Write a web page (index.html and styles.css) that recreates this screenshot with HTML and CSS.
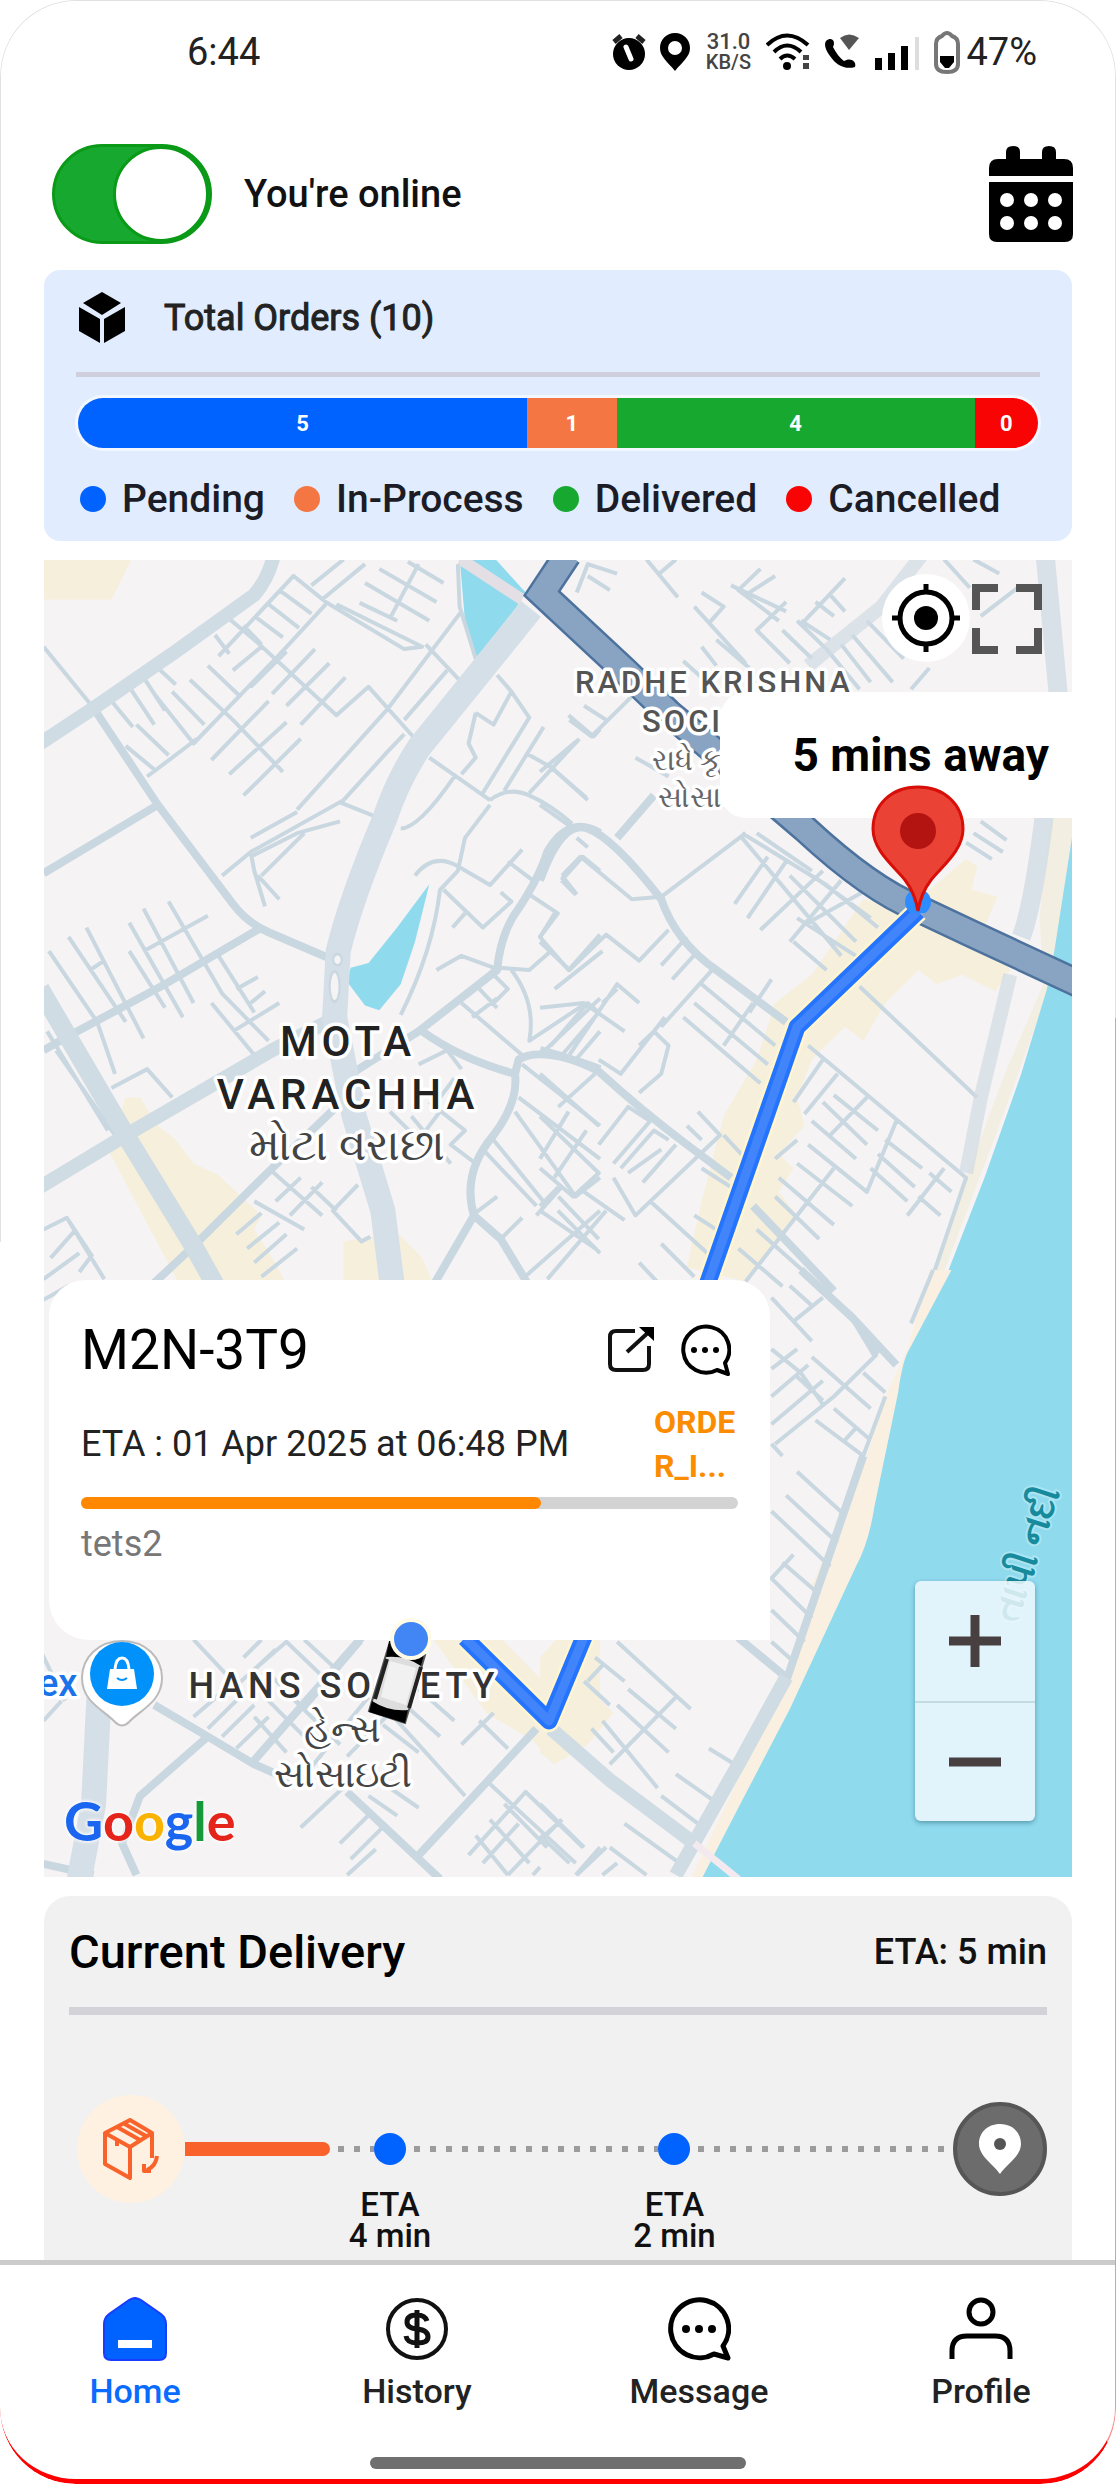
FILE: index.html
```html
<!DOCTYPE html>
<html lang="en">
<head>
<meta charset="utf-8">
<meta name="viewport" content="width=device-width, initial-scale=1">
<title>Driver Home</title>
<link rel="stylesheet" href="styles.css">
</head>
<body>
<div class="phone">
  <div class="status">
    <span>6:44</span>
    <div class="status-icons">
      <svg width="34" height="40" viewBox="0 0 34 40"><circle cx="17" cy="22" r="16"/><path d="M2 10L9 4M32 10L25 4" stroke="#222" stroke-width="5"/><path d="M14 15L19 27" stroke="#fff" stroke-width="5" stroke-linecap="round"/></svg>
      <svg width="30" height="38" viewBox="0 0 30 38"><path fill-rule="evenodd" d="M15 0C6 0 0 7 0 15C0 24 8 29 15 38C22 29 30 24 30 15C30 7 24 0 15 0ZM15 8A7 7 0 1 1 15 22A7 7 0 1 1 15 8Z"/></svg>
      <div class="speed"><span>31.0</span><span>KB/S</span></div>
      <svg width="44" height="38" viewBox="0 0 44 38"><g fill="none" stroke="#000" stroke-width="4"><path d="M1 12Q21-7 42 12"/><path d="M8 19Q21 6 35 19"/><path d="M14 26Q21 19 29 26"/></g><circle cx="21" cy="33" r="4"/><path d="M37 22h6v5h-6zM37 30h6v6h-6z" fill="#444"/></svg>
      <svg width="36" height="38" viewBox="0 0 36 38"><path d="M2 8C8 3 12 9 9 14C12 20 16 25 20 28C26 24 33 28 31 34C21 37 12 32 6 23C1 16 0 11 2 8Z"/><path d="M16 5Q25-2 35 5L25 17Z" fill="#555"/></svg>
      <svg width="46" height="38" viewBox="0 0 46 38"><path d="M1 25h7v12H1zM14 20h7v17h-7zM27 13h7v24h-7z"/><path d="M41 4h4v33h-4z" fill="#ddd"/></svg>
      <div class="battery">
        <svg width="26" height="44" viewBox="0 0 26 44"><path d="M8 6Q13 0 18 6Q24 8 24 14V34Q24 42 13 42Q2 42 2 34V14Q2 8 8 6Z" fill="#fff" stroke="#777" stroke-width="4"/><path d="M6 26h14v6l-5 6h-4l-5-6z"/></svg>
        <span>47%</span>
      </div>
    </div>
  </div>

  <header class="header">
    <label class="online"><input type="checkbox" class="switch" checked><span>You're online</span></label>
    <button class="icon-btn" aria-label="Calendar">
      <svg width="84" height="96" viewBox="0 0 84 96"><path d="M0 30V22Q0 13 9 13H17V6Q17 0 24 0T31 6V13H53V6Q53 0 60 0T67 6V13H75Q84 13 84 22V30Z"/><path d="M0 36H84V88Q84 96 76 96H8Q0 96 0 88Z"/><g fill="#fff"><circle cx="18" cy="54" r="7"/><circle cx="42" cy="54" r="7"/><circle cx="66" cy="54" r="7"/><circle cx="18" cy="77" r="7"/><circle cx="42" cy="77" r="7"/><circle cx="66" cy="77" r="7"/></g></svg>
    </button>
  </header>

  <section class="orders">
    <div class="orders-head">
      <svg width="48" height="52" viewBox="0 0 48 52"><path d="M24 0L43 11L24 23L5 11Z"/><path d="M1 15L22 27V51L1 39Z"/><path d="M47 15L26 27V51L47 39Z"/></svg>
      <h2>Total Orders (10)</h2>
    </div>
    <hr class="rule">
    <div class="stack">
      <span class="blue" style="width:46.8%">5</span><span class="orange" style="width:9.3%">1</span><span class="green" style="width:37.3%">4</span><span class="red" style="width:6.6%">0</span>
    </div>
    <ul class="legend">
      <li><i class="blue"></i>Pending</li>
      <li><i class="orange"></i>In-Process</li>
      <li><i class="green"></i>Delivered</li>
      <li><i class="red"></i>Cancelled</li>
    </ul>
  </section>

  <section class="map" aria-label="Delivery map">
    <svg class="map-canvas" viewBox="0 0 1028 1317" preserveAspectRatio="xMidYMid slice">
      <rect width="1028" height="1317" fill="#f5f3f4"/>
      <!-- north-west quarter -->
      <g transform="translate(-4 -10) scale(.35714 .47193)">
        <path class="zone" d="M0 0H270L200 105H0ZM190 1270L240 1160L280 1160L330 1220L380 1250L430 1300L500 1325L620 1410L600 1440L650 1500L700 1570H400ZM850 1465L925 1455L1005 1450L1070 1500L1110 1570H850Z"/>
        <path class="water" d="M1175 15H1270L1360 90L1335 120L1222 230L1192 170ZM1090 708L1050 830L1010 920L950 975L910 965L860 915L870 885L920 875L1000 800Z"/>
        <path d="M1175 18L1350 105" fill="none" stroke="#e4dfe4" stroke-width="26"/>
        <path class="r1" d="M10 205L150 335M490 180L530 220M500 225L710 55L800 110L1020 210L1070 205L830 115M520 140L600 190L830 350L920 290L1050 400M570 160L620 200M600 140L680 185M640 115L725 165M670 85L760 135M760 75L850 20M790 105L910 30M910 70L1090 150M895 112L1000 150M950 40L1110 110M1030 25L1130 70M1060 30L980 145M470 245L560 310M420 275L540 360L680 470M370 300L460 370M320 305L430 410L660 230L800 115M270 370L360 435M240 415L320 465M300 480L440 400M290 270L350 340M330 250L380 285M250 290L320 370M200 320L260 375M480 445L640 320M530 475L690 365M570 520L730 400M540 255L620 205M590 290L690 215M650 305L770 210M690 330L810 240M730 370L855 270M510 690L590 640L850 530L970 430L1020 390M590 640L600 680L630 755M590 650L720 600L840 575M610 690L670 740M620 690L740 600M720 550L970 340L1180 130M590 610L720 555M1020 360L1140 255M1080 200L1180 280M1280 265L1320 300L1370 355L1240 515M1220 345L1270 370L1320 300M1220 345L1200 410L1220 440L1180 475M1090 440L1260 530M1160 480Q1060 590 1010 590M840 535L940 565M1300 510L1410 375M1360 430L1430 460L1530 525M1370 515L1510 400M1260 530Q1310 500 1370 520T1490 580M1260 540L1190 610L1170 680L1120 720Q1100 850 1010 985M1050 690Q1100 640 1170 670L1260 710L1350 635M1310 660L1380 700M1130 720L1240 800L1320 745L1290 725M1155 800L1190 770M1170 30L1175 120L1220 230M1370 730L1450 770L1400 820L1480 890L1568 815M1460 700L1520 650L1568 680M1460 700L1500 730M1280 885L1370 890L1430 850M1110 890L1180 860L1270 885M1180 960L1350 1070M1230 930L1280 970M1320 890Q1390 960 1370 1040L1520 965M1270 960L1310 930L1270 900M1210 990L1280 950M25 850L160 1000L210 1110M80 820L240 1000M130 800L290 1035M250 850L350 970M250 790L400 990M290 760L430 960M360 745L510 940L640 1040M500 860L600 980M140 890L180 870M290 850L470 775M480 960L600 1070M550 930L610 905M590 960L630 935M540 1020L670 960M200 1140L300 1100L370 1160M20 1020L190 1230M45 1060L210 1240M10 1440L75 1415L145 1495L110 1530M30 1500L100 1440M10 1545L110 1490M75 1415L180 1545M640 1310L790 1410M600 1380L740 1440M550 1450L620 1405M580 1480L670 1425M600 1510L690 1450M620 1540L720 1480M660 1380L730 1330M700 1410L790 1340M760 1350L830 1400M890 1345L820 1400L900 1465L925 1455M980 1190L1060 1250L1120 1190M1040 1200L1150 1300M1090 1170L1190 1230L1150 1260L1220 1300M1060 1090L1140 1060L1180 1100M1160 1120L1100 1180M1350 1090L1568 1220M1340 1160L1568 1290M1330 1190L1500 1370L1568 1330M1270 1250L1420 1390M1240 1270L1390 1390M1400 1290L1480 1190M1440 1330L1530 1230M1210 1410L1280 1370M1290 1460L1350 1415M1350 1545L1568 1400M1450 1400L1568 1490M1390 1410L1460 1350M1480 350L1550 395L1568 380M1400 1070L1568 950M1500 1080L1568 1020"/>
        <path class="r2" d="M150 335L330 540L540 750Q580 790 640 810L810 865M10 685L330 540M10 1060L80 1030L350 920L620 800M430 1475L650 1310L830 1180M310 1560L430 1475M850 1120L1060 1020L1280 890Q1290 810 1340 760Q1400 690 1420 640Q1480 560 1568 600M1070 1020Q1180 1080 1330 1110Q1340 1170 1270 1240Q1180 1320 1215 1410L1290 1460L1370 1560M1215 1410L1100 1560M1330 1110L1340 1080Q1400 1050 1568 1100"/>
        <path class="r3" d="M0 410L150 335L380 215L600 95Q640 60 655 10M0 1350L240 1240L650 1060L830 990"/>
        <path class="r4" d="M0 930L240 1240L430 1475L500 1570"/>
        <path class="r5" d="M1375 125L1060 420Q1000 490 965 570Q870 740 835 850L825 990L880 1200L960 1400L990 1580"/>
        <ellipse class="loop" cx="833" cy="868" rx="12" ry="12"/><ellipse class="loop" cx="825" cy="925" rx="14" ry="32"/>
      </g>
      <!-- north-east quarter -->
      <g transform="translate(496 -10) scale(.36735 .47193)">
        <path class="zone" d="M1160 655L1190 670L1175 720L1245 735L1210 800L1280 890L1240 935L1150 900L1080 920L1030 890L940 960L880 1040L830 1010L740 1080L700 1160L720 1220L650 1280L690 1310L650 1360L700 1410L560 1550L400 1520L440 1380L500 1200L590 1080L640 960L740 900L880 740L1000 760Z"/>
        <path fill="#f3eee2" d="M1390 560H1470V720L1400 900L1250 1220L1080 1570H1050L1160 1330L1260 1120L1370 920L1360 780Z"/>
        <path class="water" d="M1450 600L1400 850L1380 930L1310 1110L1210 1330L1090 1570H1460Z"/>
        <path class="r1" d="M100 90L130 30L210 50M130 55L190 85M290 20L375 100M325 50L370 20M520 75L670 130M600 40L540 85L650 150M560 95L640 55M420 120L560 240M440 90L500 120L460 155M670 110L590 170L680 240M720 150L830 60M710 150L790 190M750 110L800 140M790 95L830 130M390 235L440 270M440 205L480 245M480 190L570 250M660 170L740 230M700 150L780 210M780 210L870 295M820 200L900 280M850 180L960 280M890 150L990 230M1010 295L1060 250M1180 20L1250 50M1100 20L1170 80M1200 140L1300 80M80 360L140 395L250 310M120 330L180 360M0 470L100 405M30 460L130 530M0 540L90 590M100 610L130 630M60 690L110 650L250 740L330 735L560 600M260 440L350 480M60 690L100 730M550 600L780 710L920 800M590 600L740 680M530 750L620 650M565 780L670 660M600 805L770 680M680 830L820 700M550 610L820 860M700 780L860 860M690 830L780 890M730 790L890 720M760 700L900 780M680 690L860 830M630 910L570 980M0 820L40 770M0 830L80 890L180 815L270 870L350 805M330 880L400 820M360 910L430 850M0 970L120 960L230 1020M40 930L170 850M30 1050L130 960L160 980L60 1070M170 960L210 930M80 1070L210 920L270 960M160 1080L220 1110L340 990M270 1050L310 1020L350 1050L330 1110L270 1150M330 1010L480 880M440 920L640 1050M420 960L620 1090M390 990L600 1130M500 1050L580 960M870 925L1190 1160M730 1050L1160 1330L1060 1560M690 1170L770 1080M720 1195L810 1110M770 1170L890 1260M800 1155L920 1230M740 1210L860 1290M790 1240L890 1160M730 1260L890 1360L970 1210M700 1300L850 1390M650 1330L800 1430M640 1370L760 1460M560 1550L800 1310M640 1290L700 1250M940 1250L1040 1310M920 1280L1020 1350M900 1310L1000 1380M1000 1410L1100 1310M1030 1370L1090 1410M1060 1320L1120 1360M1180 600L1260 640M1160 620L1230 655M1200 575L1270 615M0 1110L160 1220M50 1180L150 1110M160 1260L240 1180L300 1210L200 1300M220 1310L310 1230L350 1250M240 1320L330 1270M280 1340L370 1260M0 1200L160 1320L90 1370L0 1310M400 1220L440 1250M430 1190L490 1240L260 1410L200 1330M0 1390L50 1350M120 1360L230 1420M50 1370L160 1460M0 1400L150 1480M20 1545L180 1400M300 1380L470 1500M330 1470L420 1540M270 1510L330 1560M420 1410L500 1450M590 1440L720 1530M540 1480L660 1560M500 1240L560 1290M440 1310L540 1360"/>
        <path class="r2" d="M0 700Q60 570 130 590T330 740Q370 830 480 890L670 1000M0 1060Q100 1080 160 1105Q280 1190 400 1260L520 1330M210 610L310 520M580 1390L800 1570"/>
        <path class="r3" d="M730 245L930 120L1040 10M1160 1320L1200 1160L1280 900" stroke-opacity=".7"/>
        <path class="r4" d="M1375 10L1410 300L1370 580Q1340 760 1310 820" stroke-opacity=".8"/>
        <path d="M75 10L5 92L230 255L350 345L450 410L720 590Q900 720 1030 760L1180 815L1470 920" fill="none" stroke="#4c729d" stroke-width="29" vector-effect="non-scaling-stroke"/>
        <path d="M75 10L5 92L230 255L350 345L450 410L720 590Q900 720 1030 760L1180 815L1470 920" fill="none" stroke="#89a4c2" stroke-width="24" vector-effect="non-scaling-stroke"/>
      </g>
      <!-- south-west quarter -->
      <g transform="translate(-4 710) scale(.35714 .39541)">
        <path class="zone" d="M1090 920H1568V1160L1440 1250L1380 1190L1250 1120Z"/>
        <path fill="#f5f3f4" d="M1290 930L1430 1060L1400 980L1450 930Z"/>
        <path class="r1" d="M10 75L80 40M10 1140L60 1090M430 935L550 1050L690 940L840 1070M570 980L620 935M600 1010L660 960M740 935L830 1010M640 1020L740 1110L900 940M680 1060L840 1200M430 1130L520 1060M470 1160L560 1080M510 1180L600 1100M550 1210L640 1130M630 1080L740 1180M600 1130L690 1220M730 1290L920 1080M1010 1090L1120 1180M1060 1060L1160 1140M860 1230L980 1120L1190 1330M1180 1200L1270 1120M1230 1140L1310 1210M960 1150L1060 1220M1260 1300L1500 1500M1200 1480L1360 1320L1520 1460M1220 1430L1310 1530M1260 1390L1370 1500M1300 1350L1420 1460M1240 1500L1340 1400M1310 1530L1460 1390M730 1410L860 1300M840 1450L930 1370M870 1490L970 1400M860 1530L940 1465M920 1330L1000 1380M980 1310L1060 1360M1380 1530L1400 1510M1500 1530L1568 1460M0 960L70 1090"/>
        <path class="r2" d="M320 1100L470 1180L600 1250L700 1290M470 1180L280 1330L230 1450L270 1530M600 1240L900 930M860 1320L1120 1540M1060 1480L1390 1160M0 1500L150 1530"/>
        <path class="r5" d="M165 1080L150 1350L110 1540"/>
      </g>
      <!-- south-east quarter -->
      <g transform="translate(496 710) scale(.36735 .39541)">
        <path class="zone" d="M0 980L110 1040L200 1120L130 1200L40 1250L0 1220ZM820 620L740 800L780 800Z"/>
        <path fill="#f9f0e2" d="M1060 0L1000 200L940 320L890 470L790 750L690 1000L590 1190L410 1540H500L900 800L1140 0Z"/>
        <path class="water" d="M1120 0L1000 210Q985 240 975 310L910 600Q895 690 860 750L680 1110L540 1360L440 1540H1460V0Z"/>
        <path class="r1" d="M630 70L740 180M690 130L770 70M680 40L740 90M630 200L710 260L770 340M630 320L730 240M630 390L770 280M640 440L800 320L915 215L870 150M700 270L770 330M740 220L900 350M630 440L660 470M800 350L900 430M880 260L940 310M750 380L880 470M830 430L860 400M700 510L830 620M670 570L810 690M630 610L790 750M690 720L630 780L740 880M660 740L760 820M630 860L720 940M630 940L690 990M630 250L700 200M210 940L410 1110M150 980L230 1040M120 1040L190 1100M130 1040L170 1000M240 1060L370 1160M210 1100L350 1220M170 1140L320 1310M140 1160L200 1220M190 1250L370 1080M460 1210L530 1250M370 1275L470 1340M330 1330L430 1400M230 1400L380 1500M190 1460L290 1530M0 1350L120 1460M0 1440L60 1390M100 1530L180 1460M0 1430L80 1500M1010 135L1070 0M170 1530L210 1500M820 620L940 320"/>
        <path class="r2" d="M710 0L850 120L970 240M860 130L915 215M540 930L670 1030M880 470L670 1040"/>
        <path class="r3" d="M30 1160L190 1290L420 1450M670 1030L540 1250L370 1530"/>
        <path d="M420 1450L540 1540" stroke="#f3e9ee" stroke-width="7" vector-effect="non-scaling-stroke"/>
      </g>
      <path class="route-glow" d="M874 351L753 467L542 1072L505 1161L421 1078"/>
      <path class="route" d="M874 351L753 467L542 1072L505 1161L421 1078"/>
      <path class="route-core" d="M874 351L753 467L542 1072L505 1161L421 1078"/>

      <g class="labels">
        <text class="place" x="304" y="496">MOTA</text>
        <text class="place" x="304" y="549">VARACHHA</text>
        <text class="guj-l" x="303" y="600">મોટા વરાછા</text>
        <text class="area" x="670" y="133">RADHE KRISHNA</text>
        <text class="area start" x="598" y="172">SOCIETY</text>
        <text class="guj-s start" x="608" y="210">રાધે કૃષ્ણ</text>
        <text class="guj-s start" x="614" y="247">સોસાયટી</text>
        <text class="hans" x="300" y="1138">HANS SOCIETY</text>
        <text class="guj" x="298" y="1182">હેન્સ</text>
        <text class="guj" x="299" y="1227">સોસાઇટી</text>
        <text class="poi start" x="-6" y="1136">ex</text>
        <text class="river start" transform="translate(973 1064) rotate(-72)">તાપી નદી</text>
      </g>

      <!-- shop marker -->
      <path d="M78 1081C54 1081 38 1098 38 1118C38 1142 60 1150 71 1162Q78 1169 85 1162C96 1150 118 1142 118 1118C118 1098 102 1081 78 1081Z" fill="#fff" stroke="#bbb" stroke-width="2"/>
      <circle cx="78" cy="1114" r="32" fill="#0091fa"/>
      <path d="M66 1109H90L93 1129H63Z" fill="#fff"/><path d="M71 1109Q72 1098 78 1098T85 1109" fill="none" stroke="#fff" stroke-width="3"/><path d="M73 1118Q78 1122 83 1118" fill="none" stroke="#0091fa" stroke-width="2"/>
    </svg>

    <button class="locate" aria-label="My location">
      <svg width="68" height="68" viewBox="0 0 68 68"><g fill="none" stroke="#000" stroke-width="5"><circle cx="34" cy="34" r="26"/><path d="M34 0V9M34 59V68M0 34H9M59 34H68"/></g><circle cx="34" cy="34" r="12"/></svg>
    </button>
    <button class="full" aria-label="Full screen">
      <svg width="70" height="70" viewBox="0 0 70 70"><path d="M4 26V4H26M44 4H66V26M66 44V66H44M26 66H4V44" fill="none" stroke="#555" stroke-width="8"/></svg>
    </button>
    <div class="bubble">5 mins away</div>
    <svg class="pin" width="94" height="128" viewBox="0 0 94 128"><circle cx="47" cy="117" r="13" fill="#2d8cff"/><path d="M47 2C20 2 2 20 2 44C2 66 24 82 34 95Q44 108 47 126Q50 108 60 95C70 82 92 66 92 44C92 20 74 2 47 2Z" fill="#ea4335" stroke="#d80f08" stroke-width="3"/><circle cx="47" cy="46" r="18" fill="#b31412"/></svg>

    <article class="order">
      <div class="order-head">
        <h3>M2N-3T9</h3>
        <div class="order-actions">
          <button class="icon-btn" aria-label="Open order">
            <svg width="48" height="48" viewBox="0 0 48 48"><path d="M28 5H9Q3 5 3 11V38Q3 44 9 44H36Q42 44 42 38V20" fill="none" stroke="#111" stroke-width="4"/><path d="M20 26L44 4" stroke="#111" stroke-width="4"/><path d="M32 1H47V15Z"/></svg>
          </button>
          <button class="icon-btn" aria-label="Message customer">
            <svg width="52" height="52" viewBox="0 0 52 52"><path d="M46 39A23 23 0 1 0 38 46L49 50Z" fill="none" stroke="#000" stroke-width="4" stroke-linejoin="round"/><circle cx="15" cy="26" r="3"/><circle cx="26" cy="26" r="3"/><circle cx="37" cy="26" r="3"/></svg>
          </button>
        </div>
      </div>
      <div class="order-row"><span>ETA : 01 Apr 2025 at 06:48 PM</span><strong>ORDE<br>R_I...</strong></div>
      <div class="progress"><span style="width:70%"></span></div>
      <p>tets2</p>
    </article>

    <svg class="car" width="64" height="108" viewBox="0 0 64 108"><path d="M22 28L58 38L38 106L2 94Z" fill="#ddd" stroke="#555" stroke-width="2"/><path d="M22 24Q40 24 58 35L54 49Q38 38 19 40Z"/><path d="M5 84Q22 95 41 93L38 106L2 95Z"/><path d="M23 44L49 51L39 88L14 80Z" fill="#f1f1f1"/><path d="M20 42L8 82M54 50L42 91" stroke="#222" stroke-width="4"/><circle cx="44" cy="22" r="21" fill="#fffbe6"/><circle cx="44" cy="22" r="17" fill="#4285f4"/></svg>

    <div class="zoom">
      <button aria-label="Zoom in"><svg width="54" height="54" viewBox="0 0 54 54"><path d="M27 1V53M1 27H53" stroke="#484040" stroke-width="9"/></svg></button>
      <button aria-label="Zoom out"><svg width="54" height="54" viewBox="0 0 54 54"><path d="M1 27H53" stroke="#484040" stroke-width="9"/></svg></button>
    </div>
    <div class="google"><span class="g1">G</span><span class="g2">o</span><span class="g3">o</span><span class="g1">g</span><span class="g4">l</span><span class="g2">e</span></div>
  </section>

  <section class="delivery">
    <div class="delivery-head"><h2>Current Delivery</h2><span>ETA: 5 min</span></div>
    <hr class="rule thick">
    <div class="timeline">
      <div class="start-stop">
        <svg width="58" height="62" viewBox="0 0 58 62"><g fill="none" stroke="#f9622a" stroke-width="4" stroke-linejoin="round"><path d="M50 40V15L28 2L3 15V46L28 60V29L3 15M28 29L50 15M15 9L38 22M21 5L44 18M15 22V28"/><path d="M55 38Q54 48 45 52M42 46V53H49"/></g></svg>
      </div>
      <div class="done"></div>
      <div class="dots d1"></div>
      <div class="stop"><div class="stop-label"><span>ETA</span><span>4 min</span></div></div>
      <div class="dots d2"></div>
      <div class="stop"><div class="stop-label"><span>ETA</span><span>2 min</span></div></div>
      <div class="dots d3"></div>
      <div class="end-stop">
        <svg width="44" height="50" viewBox="0 0 44 50"><path d="M22 0C9 0 1 9 1 20C1 32 15 40 22 50C29 40 43 32 43 20C43 9 35 0 22 0Z" fill="#fff"/><circle cx="22" cy="20" r="6" fill="#555"/></svg>
      </div>
    </div>
  </section>

  <footer class="footer">
    <nav class="tabs">
      <a href="#home" class="active">
        <svg width="64" height="64" viewBox="0 0 64 64"><path d="M26 3Q32-1 38 3L58 17Q63 21 63 27V56Q63 63 56 63H8Q1 63 1 56V27Q1 21 6 17Z" fill="#0062ff" stroke="#1a3cff" stroke-width="2"/><path d="M15 43H49V51H15Z" fill="#fff"/></svg>
        Home</a>
      <a href="#history">
        <svg width="64" height="64" viewBox="0 0 64 64" fill="none" stroke="#111" stroke-width="4"><circle cx="32" cy="32" r="29"/><path d="M42 24Q40 18 32 18Q22 18 22 25Q22 31 32 32Q43 33 43 40Q43 46 32 46Q22 46 21 39M32 13V51" stroke-width="5"/></svg>
        History</a>
      <a href="#message">
        <svg width="64" height="64" viewBox="0 0 64 64"><path d="M56 49A29 29 0 1 0 47 57L61 61Z" fill="none" stroke="#000" stroke-width="5" stroke-linejoin="round"/><circle cx="19" cy="32" r="4"/><circle cx="32" cy="32" r="4"/><circle cx="45" cy="32" r="4"/></svg>
        Message</a>
      <a href="#profile">
        <svg width="64" height="64" viewBox="0 0 64 64" fill="none" stroke="#000" stroke-width="5"><circle cx="32" cy="15" r="12"/><path d="M3 62V54Q3 39 18 39H46Q61 39 61 54V62"/></svg>
        Profile</a>
    </nav>
    <div class="handle"></div>
  </footer>
</div>
</body>
</html>
```
FILE: styles.css
```css
* { box-sizing: border-box; }
body { margin: 0; background: #fff; font-family: Roboto, "Noto Sans", sans-serif; color: #111; }
h2, h3, p, ul { margin: 0; padding: 0; font-weight: 500; }
button { border: 0; padding: 0; background: none; cursor: pointer; }
svg { display: block; flex: none; }

.phone { position: relative; display: flex; flex-direction: column; min-height: 100vh; background: #fff; border-radius: 76px; overflow: hidden; }
.phone::before, .phone::after { content: ""; position: absolute; inset: 0; z-index: 1; pointer-events: none; }
.phone::before { bottom: 50%; border: 1px solid #e4e0e0; border-bottom: 0; border-radius: 76px 76px 0 0; }
.phone::after { top: 41%; border-right: 1px solid #ff8f8f; border-bottom: 5px solid #f00; border-radius: 0 0 76px 76px; }

.status { display: flex; justify-content: space-between; align-items: center; height: 104px; padding: 0 79px 0 187px; font-size: 38px; color: #222; }
.status-icons, .battery { display: flex; align-items: center; gap: 14px; }
.battery { gap: 6px; }
.speed { display: flex; flex-direction: column; align-items: center; width: 48px; font-size: 22px; line-height: 20px; font-weight: 500; color: #444; }
.speed span + span { font-size: 20px; }

.header { display: flex; justify-content: space-between; align-items: center; height: 166px; padding: 14px 43px 0 52px; }
.online { display: flex; align-items: center; gap: 32px; font-size: 38px; font-weight: 500; }
.switch { appearance: none; display: flex; align-items: center; justify-content: flex-end; width: 160px; height: 100px; margin: 0; padding: 2px; border: 3px solid #0a9a18; border-radius: 50px; background: #17a82f; }
.switch::before { content: ""; width: 92px; height: 92px; border-radius: 50%; background: #fff; outline: 3px solid #0a9a18; outline-offset: -1px; }
.switch:not(:checked) { justify-content: flex-start; background: #aaa; }

.orders { margin: 0 44px; padding: 16px 32px 20px; background: #e1edff; border-radius: 16px; }
.orders-head { display: flex; align-items: center; gap: 38px; height: 64px; padding-left: 2px; }
.orders-head h2 { font-size: 36px; font-weight: 400; -webkit-text-stroke: 1px #222; color: #222; }
.rule { height: 5px; margin: 22px 0 21px; border: 0; background: #cfcfde; }
.stack { display: flex; height: 50px; border-radius: 25px; overflow: hidden; margin: 0 2px; box-shadow: 0 0 0 3px #f3f7ff; }
.stack span { display: flex; align-items: center; justify-content: center; color: #fff; font-size: 22px; font-weight: 700; }
.blue { background: #0062ff; }
.orange { background: #f37643; }
.green { background: #17a82f; }
.red { background: #f80404; }
.legend { display: flex; gap: 29px; margin-top: 29px; padding-left: 4px; list-style: none; }
.legend li { display: flex; align-items: center; gap: 16px; font-size: 39px; line-height: 44px; font-weight: 500; color: #1c1c26; white-space: nowrap; }
.legend i { width: 26px; height: 26px; border-radius: 50%; }

.map { position: relative; margin: 19px 44px 0; aspect-ratio: 1028 / 1317; overflow: hidden; }
.map-canvas { width: 100%; height: 100%; }
.zone { fill: #f6efdc; }
.water { fill: #90daee; }
.r1, .r2, .r3, .r4, .r5 { fill: none; stroke: #c9d7e0; stroke-linejoin: round; vector-effect: non-scaling-stroke; }
.r1 { stroke-width: 4px; }
.r2 { stroke-width: 8px; }
.r3 { stroke-width: 14px; stroke: #d0dce4; }
.r4 { stroke-width: 19px; stroke: #d0dce4; }
.r5 { stroke-width: 25px; stroke: #d5dfe7; }
.loop { fill: #f5f3f4; stroke: #c9d7e0; stroke-width: 6px; }
.route, .route-core, .route-glow { fill: none; stroke-linejoin: round; }
.route-glow { stroke: #fff6d0; stroke-width: 22px; }
.route { stroke: #2474ff; stroke-width: 17px; }
.route-core { stroke: #4285fa; stroke-width: 9px; }
.labels text { text-anchor: middle; fill: #333; stroke: #fff; stroke-width: 7px; stroke-linejoin: round; paint-order: stroke; font-weight: 500; }
.labels .start { text-anchor: start; }
.labels .place { font-size: 42px; letter-spacing: 5px; fill: #222; }
.labels .area { font-size: 31px; letter-spacing: 3px; fill: #555; }
.labels .hans { font-size: 36px; letter-spacing: 5px; }
.labels .guj { font-size: 38px; fill: #444; }
.labels .guj-l { font-size: 44px; fill: #444; }
.labels .guj-s { font-size: 30px; fill: #666; }
.labels .poi { font-size: 38px; fill: #1a73e8; }
.labels .river { font-size: 38px; fill: #178a9c; stroke: #a9e5f3; stroke-width: 4px; font-weight: 700; }

.locate, .full, .bubble, .pin, .order, .car, .zoom, .google { position: absolute; }
.locate { top: 14px; right: 102px; display: flex; align-items: center; justify-content: center; width: 88px; height: 88px; border-radius: 50%; background: #fff; }
.full { top: 24px; right: 30px; }
.bubble { top: 132px; right: 0; padding: 0 23px 0 72px; font-size: 46px; line-height: 126px; font-weight: 700; color: #000; background: #fff; border-radius: 26px 0 0 26px; }
.pin { top: 225px; right: 107px; }

.order { left: 5px; top: 720px; width: 721px; height: 360px; padding: 40px 32px 0; background: #fff; border-radius: 36px 36px 0 40px; }
.order-head { display: flex; justify-content: space-between; align-items: center; height: 60px; }
.order-head h3 { font-size: 55px; font-weight: 400; color: #000; }
.order-actions { display: flex; gap: 24px; padding-right: 7px; }
.order-row { display: flex; justify-content: space-between; align-items: center; height: 88px; margin-top: 20px; font-size: 36px; color: #222; }
.order-row strong { width: 84px; font-size: 32px; line-height: 44px; font-weight: 700; color: #fb8c00; }
.progress { height: 12px; margin-top: 9px; border-radius: 6px; background: #d3d3d3; }
.progress span { display: block; height: 100%; border-radius: 6px; background: #ff8800; }
.order p { margin-top: 13px; font-size: 36px; line-height: 44px; font-weight: 400; color: #777; }
.car { left: 323px; top: 1057px; }
.zoom { right: 37px; bottom: 56px; display: flex; flex-direction: column; width: 120px; border-radius: 6px; background: rgba(240, 248, 253, .85); box-shadow: 0 2px 5px rgba(0, 60, 80, .4); }
.zoom button { display: flex; align-items: center; justify-content: center; height: 120px; }
.zoom button + button { border-top: 2px solid #c5dbe2; }
.google { left: 20px; bottom: 18px; font-family: Lato, sans-serif; font-size: 54px; line-height: 76px; font-weight: 700; text-shadow: 0 0 4px #fff, 0 0 4px #fff; }
.g1 { color: #1a66f0; }
.g2 { color: #e5251b; }
.g3 { color: #f9b300; }
.g4 { color: #159a3a; }

.delivery { flex: 1; margin: 19px 44px 0; padding: 0 25px; min-height: 364px; background: #f1f1f1; border-radius: 26px 26px 0 0; }
.delivery-head { display: flex; justify-content: space-between; align-items: center; height: 111px; font-size: 36px; font-weight: 500; }
.delivery-head h2 { font-size: 47px; color: #000; }
.thick { height: 8px; margin: 0; background: #d3d2d9; }
.timeline { display: flex; align-items: center; height: 110px; margin-top: 79px; padding-left: 8px; }
.start-stop { display: flex; align-items: center; justify-content: center; flex: none; width: 108px; height: 108px; border-radius: 50%; background: #fef1e1; }
.done { flex: none; width: 145px; height: 14px; border-radius: 0 7px 7px 0; background: #f9622a; }
.dots { height: 6px; background: repeating-linear-gradient(90deg, transparent 0 8px, #9c9c9c 8px 14px, transparent 14px 16px); }
.d1 { flex: 44; }
.d2 { flex: 253; }
.d3 { flex: 263; }
.stop { position: relative; flex: none; display: flex; justify-content: center; width: 32px; height: 32px; border-radius: 50%; background: #0062ff; }
.stop-label { position: absolute; top: 56px; display: flex; flex-direction: column; align-items: center; font-size: 33px; line-height: 31px; font-weight: 500; white-space: nowrap; }
.end-stop { display: flex; align-items: center; justify-content: center; flex: none; width: 94px; height: 94px; border: 4px solid #565656; border-radius: 50%; background: #6c6c6c; }

.footer { border-top: 5px solid #cbcbcb; background: #fff; }
.tabs { display: grid; grid-template-columns: repeat(4, 1fr); margin: 0 -6px; padding-top: 32px; }
.tabs a { display: flex; flex-direction: column; align-items: center; gap: 10px; font-size: 34px; line-height: 40px; font-weight: 500; color: #222; text-decoration: none; }
.tabs .active { color: #0a6cff; }
.handle { width: 376px; height: 12px; margin: 46px auto 15px; border-radius: 6px; background: #6f6f6f; }
```
